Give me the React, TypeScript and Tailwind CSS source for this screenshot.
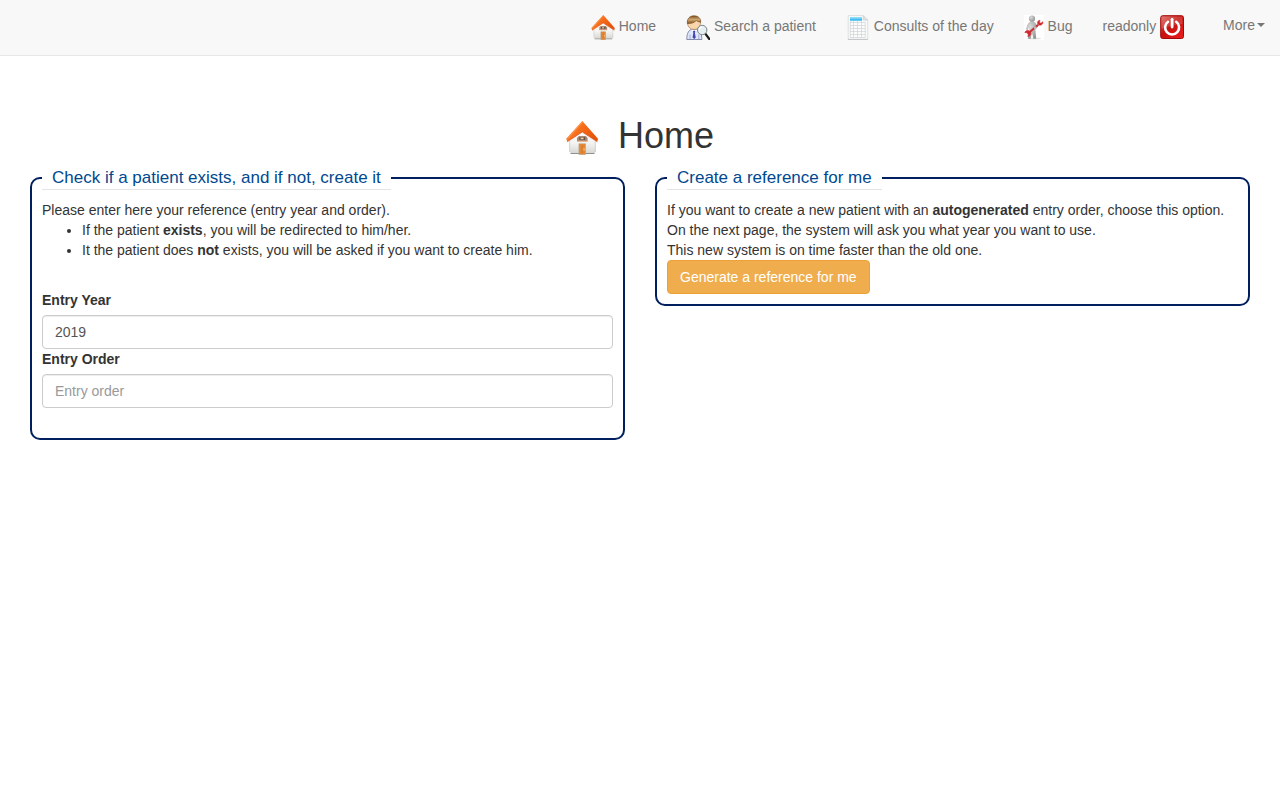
import type { ReactNode } from "react";

function HouseIcon({ className }: { className: string }) {
  return (
    <svg viewBox="0 0 32 34" className={className} aria-hidden="true">
      <defs>
        <linearGradient id="roof" x1="0" y1="0" x2="1" y2="0.5">
          <stop offset="0" stopColor="#ff9a4a" />
          <stop offset="0.5" stopColor="#f76d1a" />
          <stop offset="1" stopColor="#e8530a" />
        </linearGradient>
        <linearGradient id="wall" x1="0" y1="0" x2="0" y2="1">
          <stop offset="0" stopColor="#ffffff" />
          <stop offset="0.6" stopColor="#f3f3f1" />
          <stop offset="1" stopColor="#d6d7d3" />
        </linearGradient>
      </defs>
      <path d="M3.2 18 16.3 7l13.500 11v12.500l-1.300 2H5l-1.300-2z" fill="url(#wall)" />
      <path d="M4.500 32.500h24" stroke="#8f918d" strokeWidth="1" />
      <path d="M3.600 20v11M29.300 20v11" stroke="#c6c7c4" strokeWidth=".7" />
      <path d="M12.600 33.800V22.400h7.200v11.400z" fill="#b9a48d" />
      <path d="M13.300 33.200V23h5.800v10.200z" fill="#e58835" />
      <path d="M16.200 24v9" stroke="#c76f27" strokeWidth=".6" />
      <path d="M17.600 27.600h.9v1.600h-.9z" fill="#ffe2b5" />
      <path d="M11 20.500v-3.500l1.800-1.900h7l1.800 1.900v3.500z" fill="#a98573" />
      <path d="M13.400 16.300h5.800v2.500h-5.800z" fill="#554a45" />
      <path d="M14.600 16.600h3v1.700h-3z" fill="#f4ca96" />
      <path d="M11 20.300h10.500" stroke="#efb685" strokeWidth=".9" />
      <path d="M16.300 0 .2 17.700l1 3.100L16.300 11l15 9.800.700-3.100z" fill="url(#roof)" />
      <path d="M1.200 20.800 16.300 11l15 9.800" fill="none" stroke="#d4511c" strokeWidth=".7" />
      <path d="M1.600 17.600 16.300 1.200" stroke="#ffad70" strokeWidth=".7" />
    </svg>
  );
}

function PatientSearchIcon() {
  return (
    <svg viewBox="0 0 24 25" className="inline-block h-[25px] w-6 align-middle" aria-hidden="true">
      <defs>
        <linearGradient id="hair" x1="0" y1="0" x2="0" y2="1">
          <stop offset="0" stopColor="#7d4d1c" />
          <stop offset="0.5" stopColor="#cfa873" />
          <stop offset="1" stopColor="#80501f" />
        </linearGradient>
      </defs>
      <path d="M.8 24.500c-.1-5 1.400-8.800 4.200-10h6.500c3 1.200 4.300 5 4.300 10z" fill="#dfe8fb" stroke="#59618a" strokeWidth=".7" />
      <path d="M4 19.500v4.500M12.800 19.500v4.500" stroke="#8f9dc8" strokeWidth=".8" />
      <path d="M5 14.600 8.100 18l3.200-3.400z" fill="#fff" />
      <path d="m7.200 16 .9-.5 1 .5.200 1-.5.700 1 4.900-1.600 1.500-1.700-1.500.9-4.900-.5-.7z" fill="#4545ae" />
      <circle cx="8" cy="8" r="6.500" fill="#fbd5ac" stroke="#9a6636" strokeWidth=".6" />
      <path d="M1.400 8.500C.7 3.800 3.800.7 8 .7s7.300 3 6.600 6.500c-2-.3-3.300-.8-4.400-1.700C8.500 7.600 5.300 8.800 1.400 8.500z" fill="url(#hair)" stroke="#744817" strokeWidth=".6" />
      <path d="m19.300 18.700 4 5.300" stroke="#191919" strokeWidth="2.200" strokeLinecap="round" />
      <circle cx="16.200" cy="15" r="4.700" fill="#e5eef0" stroke="#7d8588" strokeWidth="1" />
      <path d="M13.300 14.800c.3-1.900 1.600-2.700 3.200-2.600" fill="none" stroke="#fff" strokeWidth="1.200" />
    </svg>
  );
}

function CalendarIcon() {
  return (
    <svg viewBox="0 0 24 25" className="inline-block h-[25px] w-6 align-middle" aria-hidden="true">
      <path d="M2.200.6h15l4.500 4.600v19.200H2.200z" fill="#fafbfb" stroke="#d3d6d7" strokeWidth=".7" />
      <path d="M2 24.400h19.800" stroke="#b5b8ba" strokeWidth=".7" />
      <path d="M4 2.300h12v3.500H4z" fill="#43bdf0" />
      <path d="M4 2.300h12v1.200H4z" fill="#9ae0f9" />
      <path d="M4 7.500h15.500M4 10.500h15.500M4 13.500h15.500M4 16.500h15.500M4 19.500h15.500M4 22.500h15.500M4.300 6v16.500M7.500 6v16.500M11.500 6v16.500M15.500 6v16.500M19.300 7.500v15" stroke="#d0d4d6" strokeWidth=".7" />
      <path d="M17.200.6v4.600h4.500z" fill="#dfe2e3" stroke="#c7cacb" strokeWidth=".6" />
    </svg>
  );
}

function RepairIcon() {
  return (
    <svg viewBox="0 0 20 25" className="inline-block h-[25px] w-5 align-middle" aria-hidden="true">
      <defs>
        <radialGradient id="figure" cx="0.35" cy="0.3" r="0.8">
          <stop offset="0" stopColor="#dadada" />
          <stop offset="1" stopColor="#8c8c8c" />
        </radialGradient>
      </defs>
      <path d="M0 0h20v25H0z" fill="#fff" />
      <ellipse cx="10" cy="23.500" rx="7" ry="1" fill="#e4e4e4" />
      <path d="M5.500 7.200c2-.9 4.300-.8 5.500.2l3 4-1.500 1.800-1.300-1.200.3 4 .7 7.600-2.700.5-1.400-6-1.600 6-2.500-.5 1.200-8.200-.2-3.200-1.200 3-1.700-.8c.5-3 1.500-6.300 3.400-7.200z" fill="url(#figure)" />
      <circle cx="8" cy="3.700" r="3.100" fill="url(#figure)" />
      <path d="m5.500 17.200 8.800-7.400" stroke="#cf2a2f" strokeWidth="2" />
      <path d="M18.900 6.700c.3 2.200-1.200 3.500-3.100 3.500-1.700-.2-2.700-1.800-2.100-3.400.4-1 1.200-1.500 2.200-1.600l-.4 2.200 1.500.9z" fill="#cf2a2f" stroke="#cf2a2f" strokeWidth=".6" />
      <path d="M.8 17.500c.8-1.900 2.700-2.400 4.300-1.600 1.700.9 2.200 2.800 1.200 4.300-.6.8-1.500 1.300-2.500 1.300l.5-2.100-1.400-1.700z" fill="#cf2a2f" stroke="#cf2a2f" strokeWidth=".6" />
      <circle cx="11.300" cy="12.700" r="1.500" fill="#bcbcbc" />
    </svg>
  );
}

function PowerIcon() {
  return (
    <svg viewBox="0 0 24 24" className="inline-block h-6 w-6 align-middle" aria-hidden="true">
      <defs>
        <linearGradient id="power" x1="0" y1="0" x2="1" y2="1">
          <stop offset="0" stopColor="#d9625b" />
          <stop offset="0.45" stopColor="#c5120f" />
          <stop offset="1" stopColor="#ee1d1d" />
        </linearGradient>
      </defs>
      <rect x=".7" y=".7" width="22.800" height="22.800" rx="2" fill="url(#power)" stroke="#a30909" strokeWidth="1" />
      <path d="M1.500 3c0-1 .5-1.500 1.500-1.500h18c1 0 1.500.5 1.500 1.500v6c-7 .2-14 2-21 5z" fill="#fff" fillOpacity=".16" />
      <path d="M8 6.800a7 7 0 1 0 8.200 0" fill="none" stroke="#fff" strokeWidth="2.600" strokeLinecap="round" />
      <path d="M12.100 4.300v7.700" stroke="#fff" strokeWidth="2.800" strokeLinecap="round" />
    </svg>
  );
}

function NavItem({ children }: { children: ReactNode }) {
  return (
    <li>
      <a href="#" className="block p-[15px] hover:text-[#333]">
        {children}
      </a>
    </li>
  );
}

function Panel({ title, children }: { title: string; children: ReactNode }) {
  return (
    <fieldset className="min-w-0 rounded-[10px] border-2 border-[#001f5f] p-[10px]">
      <legend className="border-b border-[#e5e5e5] px-[10px] text-[17px] leading-[23px] text-[#004990]">{title}</legend>
      {children}
    </fieldset>
  );
}

const inputClass =
  "block h-[34px] w-full rounded border border-[#ccc] bg-white px-3 py-[6px] text-[#555] shadow-[inset_0_1px_1px_rgba(0,0,0,0.075)] outline-none placeholder:text-[#999] focus:border-[#66afe9]";

export default function App() {
  return (
    <div className="min-h-screen bg-white font-['Liberation_Sans',Arial,sans-serif] text-[14px] leading-5 text-[#333]">
      <nav className="border-b border-[#e7e7e7] bg-[#f8f8f8] text-[#777]">
        <ul className="flex flex-wrap justify-end">
          <NavItem>
            <HouseIcon className="inline-block h-[25px] w-6 align-middle" /> Home
          </NavItem>
          <NavItem>
            <PatientSearchIcon /> Search a patient
          </NavItem>
          <NavItem>
            <CalendarIcon /> Consults of the day
          </NavItem>
          <NavItem>
            <RepairIcon /> Bug
          </NavItem>
          <NavItem>
            readonly <PowerIcon />
          </NavItem>
          <li className="ml-[9px]">
            <button type="button" className="flex items-center gap-[2px] p-[15px] hover:text-[#333]">
              More
              <svg viewBox="0 0 8 4" className="h-1 w-2" aria-hidden="true">
                <path d="M0 0h8L4 4z" fill="currentColor" />
              </svg>
            </button>
          </li>
        </ul>
      </nav>

      <main className="px-[30px] pt-[60px]">
        <h1 className="mb-[10px] text-center text-[36px] leading-10 font-medium">
          <HouseIcon className="inline-block h-[34px] w-8 align-middle" />
          {"\u00a0\u00a0"}Home
        </h1>

        <div className="grid items-start gap-[30px] md:grid-cols-2">
          <Panel title="Check if a patient exists, and if not, create it">
            <p>Please enter here your reference (entry year and order).</p>
            <ul className="list-disc pl-10">
              <li>
                If the patient <b>exists</b>, you will be redirected to him/her.
              </li>
              <li>
                It the patient does <b>not</b> exists, you will be asked if you want to create him.
              </li>
            </ul>
            <form className="mt-[30px] mb-5">
              <label htmlFor="entry-year" className="mb-[5px] block font-bold">
                Entry Year
              </label>
              <input id="entry-year" type="text" defaultValue="2019" className={inputClass} />
              <label htmlFor="entry-order" className="mb-[5px] block font-bold">
                Entry Order
              </label>
              <input id="entry-order" type="text" placeholder="Entry order" className={inputClass} />
            </form>
          </Panel>

          <Panel title="Create a reference for me">
            <p>
              If you want to create a new patient with an <b>autogenerated</b> entry order, choose this option.
            </p>
            <p>On the next page, the system will ask you what year you want to use.</p>
            <p>This new system is on time faster than the old one.</p>
            <button
              type="button"
              className="block rounded border border-[#eea236] bg-[#f0ad4e] px-3 py-[6px] text-white hover:bg-[#ec971f]"
            >
              Generate a reference for me
            </button>
          </Panel>
        </div>
      </main>
    </div>
  );
}
